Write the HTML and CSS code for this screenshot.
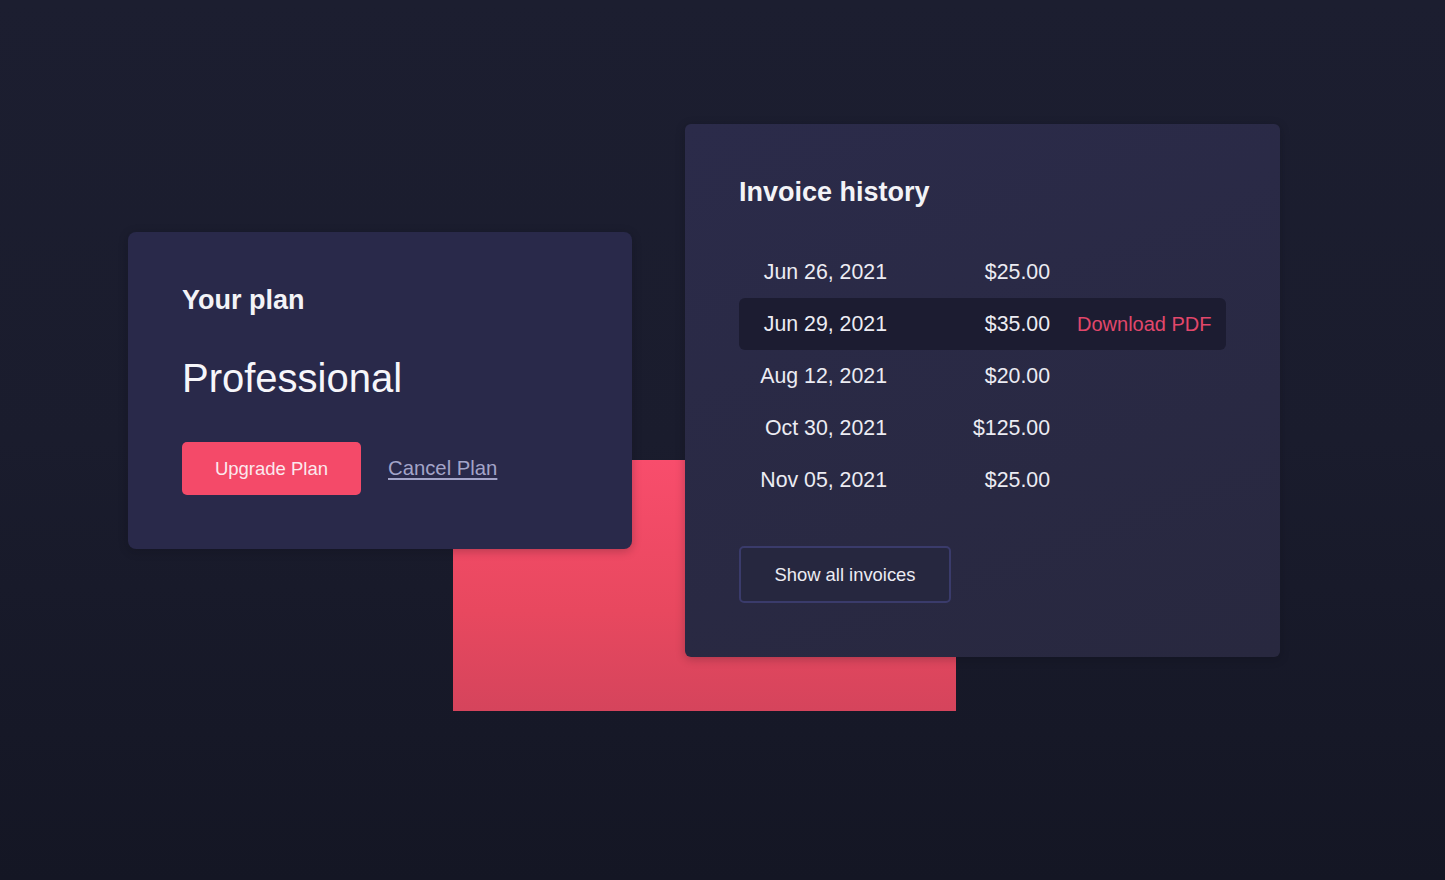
FILE: index.html
```html
<!DOCTYPE html>
<html lang="en">
<head>
<meta charset="utf-8">
<title>Billing</title>
<link rel="stylesheet" href="styles.css">
</head>
<body>
<main class="stage">
  <div class="accent-block"></div>
  <section class="card plan-card">
    <h2 class="card-title">Your plan</h2>
    <p class="plan-name">Professional</p>
    <div class="plan-actions">
      <button class="btn-primary">Upgrade Plan</button>
      <a class="link-cancel" href="#">Cancel Plan</a>
    </div>
  </section>
  <section class="card invoice-card">
    <h2 class="card-title">Invoice history</h2>
    <div class="invoice-list">
      <div class="invoice-row"><span class="inv-date">Jun 26, 2021</span><span class="inv-amount">$25.00</span><span class="inv-action"></span></div>
      <div class="invoice-row is-active"><span class="inv-date">Jun 29, 2021</span><span class="inv-amount">$35.00</span><a class="inv-action" href="#">Download PDF</a></div>
      <div class="invoice-row"><span class="inv-date">Aug 12, 2021</span><span class="inv-amount">$20.00</span><span class="inv-action"></span></div>
      <div class="invoice-row"><span class="inv-date">Oct 30, 2021</span><span class="inv-amount">$125.00</span><span class="inv-action"></span></div>
      <div class="invoice-row"><span class="inv-date">Nov 05, 2021</span><span class="inv-amount">$25.00</span><span class="inv-action"></span></div>
    </div>
    <button class="btn-outline">Show all invoices</button>
  </section>
</main>
</body>
</html>
```
FILE: styles.css
```css
* { box-sizing: border-box; }

html, body {
  margin: 0;
  height: 100%;
}

body {
  background: linear-gradient(180deg, #1c1e30 0%, #1a1c2d 50%, #141624 100%);
  font-family: "Liberation Sans", Arial, sans-serif;
  color: #f1f1f6;
  overflow: hidden;
}

.stage {
  position: relative;
  height: 880px;
  display: flex;
  align-items: flex-start;
  gap: 53px;
  padding: 124px 0 0 128px;
}

.accent-block {
  position: absolute;
  left: 453px;
  top: 460px;
  width: 503px;
  height: 251px;
  background: linear-gradient(180deg, #f84d6c 0%, #e8485f 60%, #d5445c 100%);
  z-index: 0;
}

.card {
  position: relative;
  z-index: 1;
  background: linear-gradient(160deg, #2b2b4a 0%, #28283f 100%);
  border-radius: 8px;
  padding: 53px 54px 54px;
  box-shadow: 0 2px 10px rgba(10, 10, 20, 0.25);
}

.plan-card {
  width: 504px;
  height: 317px;
  margin-top: 108px;
  background: #29294a;
}

.invoice-card {
  width: 595px;
  height: 533px;
  border-radius: 6px;
}

.card-title {
  margin: 0;
  font-size: 27px;
  line-height: 30px;
  font-weight: 700;
  color: #f3f3f7;
}

.plan-name {
  margin: 40px 0 0;
  font-size: 40px;
  line-height: 46px;
  font-weight: 400;
  color: #f6f6fa;
}

.plan-actions {
  margin-top: 41px;
  display: flex;
  align-items: center;
  gap: 27px;
}

.btn-primary {
  height: 53px;
  width: 179px;
  border: none;
  border-radius: 5px;
  background: #f44a69;
  color: #fbe9ee;
  font-family: inherit;
  font-size: 18.5px;
  padding: 0;
}

.link-cancel {
  font-size: 20.3px;
  color: #a3a4c8;
  text-decoration: underline;
  text-underline-offset: 3px;
}

.invoice-list {
  margin-top: 39px;
  display: flex;
  flex-direction: column;
}

.invoice-row {
  display: grid;
  grid-template-columns: 148px 163px 1fr;
  align-items: center;
  height: 52px;
  border-radius: 6px;
  font-size: 21.3px;
  color: #ececf3;
}

.invoice-row.is-active {
  background: #1c1c31;
}

.inv-date, .inv-amount {
  text-align: right;
}

.inv-action {
  padding-left: 27px;
  font-size: 20px;
  color: #e2476b;
  text-decoration: none;
}

.btn-outline {
  margin-top: 40px;
  width: 212px;
  height: 57px;
  border: 2px solid #3a3b6b;
  border-radius: 5px;
  background: #26273f;
  color: #ececf3;
  font-family: inherit;
  font-size: 18.4px;
  padding: 0;
}
```
